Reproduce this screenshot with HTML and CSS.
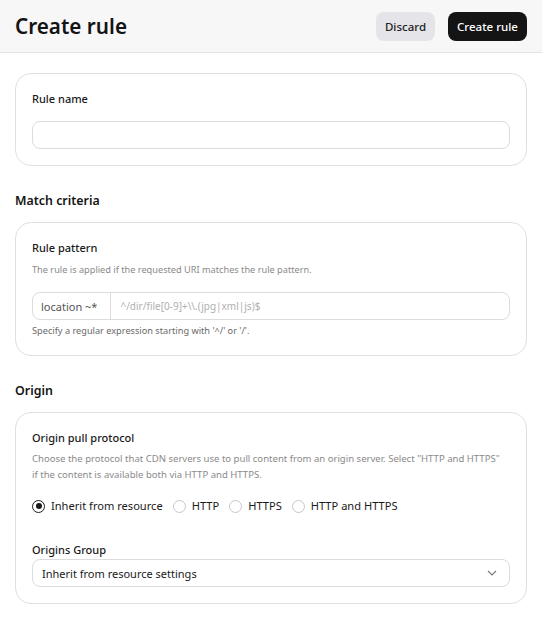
FILE: index.html
```html
<!DOCTYPE html>
<html lang="en">
<head>
<meta charset="utf-8">
<title>Create rule</title>
<link rel="stylesheet" href="styles.css">
</head>
<body>
<header class="topbar">
  <h1 class="title">Create rule</h1>
  <div class="actions">
    <button class="btn btn-secondary" type="button">Discard</button>
    <button class="btn btn-primary" type="button">Create rule</button>
  </div>
</header>
<main class="content">
  <section class="card">
    <label class="label" for="rule-name">Rule name</label>
    <input class="input name-input" id="rule-name" type="text">
  </section>

  <h2 class="section-title">Match criteria</h2>
  <section class="card">
    <div class="label">Rule pattern</div>
    <p class="desc">The rule is applied if the requested URI matches the rule pattern.</p>
    <div class="input group-input">
      <span class="addon">location ~*</span>
      <span class="placeholder">^/dir/file[0-9]+\\.(jpg|xml|js)$</span>
    </div>
    <p class="helper">Specify a regular expression starting with '^/' or '/'.</p>
  </section>

  <h2 class="section-title section-origin">Origin</h2>
  <section class="card">
    <div class="label">Origin pull protocol</div>
    <p class="desc desc-long">Choose the protocol that CDN servers use to pull content from an origin server. Select "HTTP and HTTPS" if the content is available both via HTTP and HTTPS.</p>
    <div class="radios">
      <span class="radio checked"><span class="dot"></span>Inherit from resource</span>
      <span class="radio"><span class="dot"></span>HTTP</span>
      <span class="radio"><span class="dot"></span>HTTPS</span>
      <span class="radio"><span class="dot"></span>HTTP and HTTPS</span>
    </div>
    <div class="label group-label">Origins Group</div>
    <div class="input select">
      <span>Inherit from resource settings</span>
      <svg class="chevron" width="10" height="6" viewBox="0 0 10 6"><path d="M1 1l4 4 4-4" fill="none" stroke="#777" stroke-width="1.1"/></svg>
    </div>
  </section>
</main>
</body>
</html>
```
FILE: styles.css
```css
* { box-sizing: border-box; }
html, body { margin: 0; padding: 0; background: #fff; }
body {
  font-family: "Noto Sans", "Open Sans", sans-serif;
  color: #1a1a1a;
  width: 542px;
}
.topbar {
  height: 53px;
  background: #f7f7f7;
  border-bottom: 1px solid #e2e2e2;
  display: flex;
  align-items: center;
  justify-content: space-between;
  padding: 0 15px;
}
.title {
  margin: 0;
  font-size: 20.7px;
  font-weight: 600;
  line-height: 28px;
  color: #141414;
}
.actions { display: flex; gap: 13px; margin-top: 1px; }
.btn {
  font-family: inherit;
  font-size: 11.5px;
  font-weight: 500;
  height: 29px;
  border: none;
  border-radius: 8px;
  padding: 0;
  white-space: nowrap;
}
.btn-secondary { background: #e5e4e8; color: #222; width: 59px; }
.btn-primary { background: #141414; color: #fff; width: 79px; }
.content { padding: 20px 15px 18px; }
.card {
  border: 1px solid #e0e0e0;
  border-radius: 16px;
  padding: 16px;
  display: flex;
  flex-direction: column;
}
.label {
  font-size: 11px;
  line-height: 16px;
  font-weight: 500;
  color: #1a1a1a;
  margin-top: 1px;
}
.name-input { margin-top: 14px; }
.input {
  height: 28px;
  border: 1px solid #dcdcdc;
  border-radius: 8px;
  background: #fff;
  font-family: inherit;
  width: 100%;
}
.section-title {
  margin: 25px 0 11px;
  font-size: 12.4px;
  font-weight: 600;
  line-height: 20px;
  color: #141414;
}
.section-origin { margin-top: 25px; }
.desc {
  margin: 6px 0 0;
  font-size: 9.2px;
  line-height: 16px;
  color: #8a8a8a;
}
.desc-long { margin-top: 5px; font-size: 9.55px; max-width: 474px; }
.group-input {
  margin-top: 14px;
  display: flex;
  align-items: stretch;
}
.addon {
  display: flex;
  align-items: center;
  padding: 0 13px 0 8px;
  border-right: 1px solid #dcdcdc;
  color: #555;
  font-size: 11px;
}
.placeholder {
  display: flex;
  align-items: center;
  padding-left: 9px;
  color: #b0b0b0;
  font-size: 10px;
}
.helper {
  margin: 3px 0 0;
  font-size: 9.2px;
  line-height: 16px;
  color: #6a6a6a;
}
.radios {
  display: flex;
  gap: 10px;
  margin-top: 15px;
  font-size: 11.1px;
  line-height: 16px;
  color: #1a1a1a;
}
.radio { display: flex; align-items: center; gap: 6px; }
.dot {
  width: 13px;
  height: 13px;
  border-radius: 50%;
  border: 1px solid #c8c8c8;
  display: inline-block;
  position: relative;
}
.radio.checked .dot { border-color: #1a1a1a; }
.radio.checked .dot::after {
  content: "";
  position: absolute;
  left: 2.5px; top: 2.5px;
  width: 6px; height: 6px;
  border-radius: 50%;
  background: #1a1a1a;
}
.group-label { margin-top: 28px; }
.select {
  margin-top: 1px;
  display: flex;
  align-items: center;
  justify-content: space-between;
  padding: 0 12px 0 9px;
  font-size: 11px;
  color: #1a1a1a;
}
.chevron { display: block; }
```
